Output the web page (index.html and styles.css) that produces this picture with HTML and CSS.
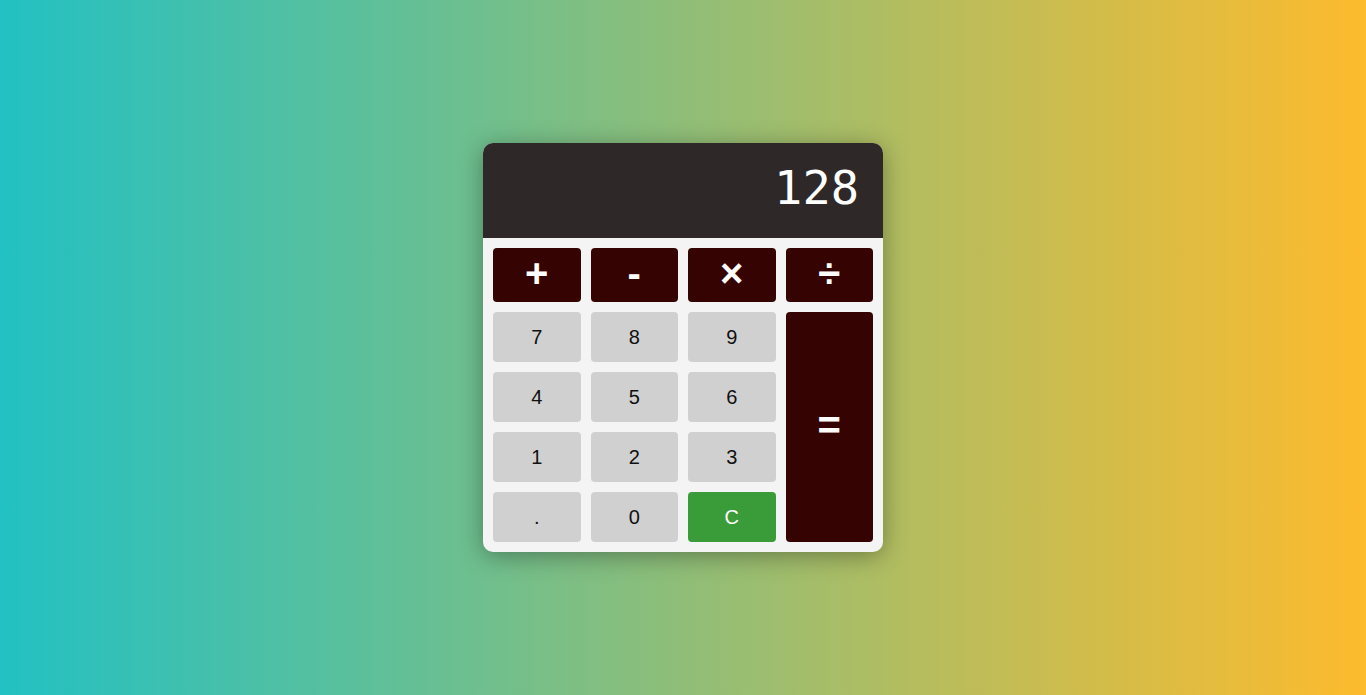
FILE: index.html
```html
<!DOCTYPE html>
<html lang="en">
<head>
<meta charset="utf-8">
<title>Calculator</title>
<link rel="stylesheet" href="styles.css">
</head>
<body>
<div class="calculator">
  <div class="display">128</div>
  <div class="keys">
    <button class="key op">+</button>
    <button class="key op">-</button>
    <button class="key op">&times;</button>
    <button class="key op">&divide;</button>
    <button class="key num">7</button>
    <button class="key num">8</button>
    <button class="key num">9</button>
    <button class="key op equals">=</button>
    <button class="key num">4</button>
    <button class="key num">5</button>
    <button class="key num">6</button>
    <button class="key num">1</button>
    <button class="key num">2</button>
    <button class="key num">3</button>
    <button class="key num">.</button>
    <button class="key num">0</button>
    <button class="key clear">C</button>
  </div>
</div>
</body>
</html>
```
FILE: styles.css
```css
* { box-sizing: border-box; }
html, body { height: 100%; }
body {
  margin: 0;
  display: flex;
  align-items: center;
  justify-content: center;
  background: linear-gradient(90deg, #22c1c3 0%, #fdbb2d 100%);
  font-family: "Liberation Sans", Arial, sans-serif;
}
.calculator {
  width: 400px;
  border-radius: 10px;
  overflow: hidden;
  background: #f4f4f4;
  box-shadow: 0 4px 24px rgba(0, 0, 0, 0.35);
}
.display {
  height: 95px;
  background: #2f2828;
  color: #fff;
  font-family: "DejaVu Sans Mono", monospace;
  font-size: 47px;
  display: flex;
  align-items: center;
  justify-content: flex-end;
  padding: 0 24px 6px 20px;
}
.keys {
  display: grid;
  grid-template-columns: repeat(4, 1fr);
  grid-template-rows: 54px repeat(4, 50px);
  gap: 10px;
  padding: 10px;
}
.key {
  border: none;
  border-radius: 4px;
  font-family: "Liberation Sans", Arial, sans-serif;
  padding: 0;
  margin: 0;
}
.num {
  background: #d0d0d0;
  color: #111;
  font-size: 20px;
}
.op {
  background: #360303;
  color: #fff;
  font-size: 40px;
  font-weight: bold;
  padding-bottom: 4px;
}
.equals {
  grid-column: 4;
  grid-row: 2 / span 4;
}
.clear {
  background: #3a9c38;
  color: #fff;
  font-size: 20px;
}
```
